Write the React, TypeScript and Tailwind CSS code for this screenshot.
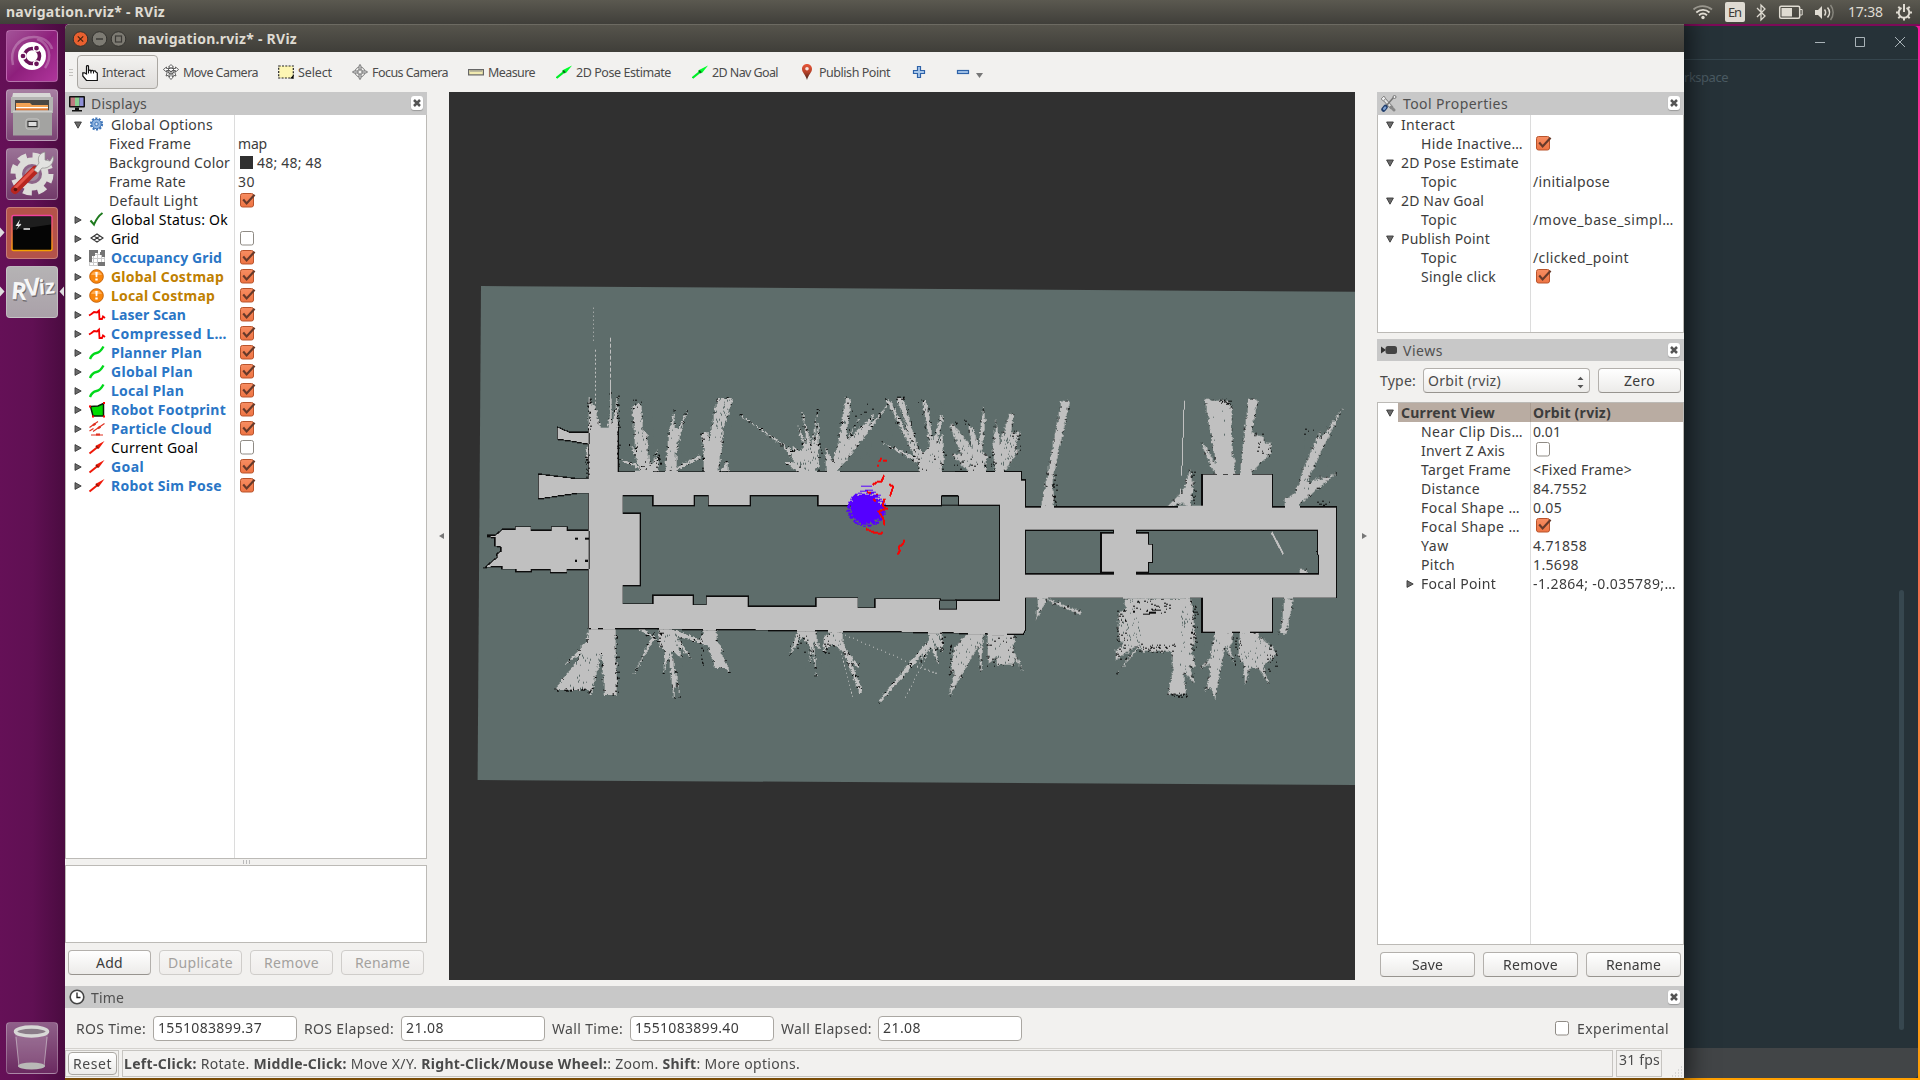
import React, { useLayoutEffect, useRef, useState } from "react";

const FONT = "font-['Noto_Sans','Open_Sans',sans-serif]";

/* Text tracked so that it occupies the given width. */
function T({ w, className = "", children }: { w: number; className?: string; children: React.ReactNode }) {
  const ref = useRef<HTMLSpanElement>(null);
  const [ls, setLs] = useState(0);
  useLayoutEffect(() => {
    const el = ref.current;
    if (!el) return;
    el.style.letterSpacing = "0px";
    const n = (el.textContent || "").length || 1;
    const spacing = (w - el.getBoundingClientRect().width) / n;
    setLs(spacing);
    el.style.letterSpacing = `${spacing}px`;
  }, [w]);
  return (
    <span ref={ref} className={`inline-block whitespace-pre ${className}`} style={{ letterSpacing: `${ls}px` }}>
      {children}
    </span>
  );
}

function Check({ on = true }: { on?: boolean }) {
  return (
    <svg width="16" height="15" viewBox="0 0 16 15" className="shrink-0">
      <defs>
        <linearGradient id="ck" x1="0" y1="0" x2="0" y2="1">
          <stop offset="0" stopColor="#f78d62" />
          <stop offset="1" stopColor="#ee7443" />
        </linearGradient>
      </defs>
      <rect x="0.5" y="0.5" width="13" height="13.5" rx="2" fill={on ? "url(#ck)" : "#fff"} stroke={on ? "#b9542c" : "#8f8b85"} />
      {on && <path d="M3.2 6.6 6.6 10.4 14.6 1.8" fill="none" stroke="#66392a" strokeWidth="2.2" />}
    </svg>
  );
}

function Tri({ open }: { open?: boolean }) {
  return (
    <svg width="8" height="8" viewBox="0 0 8 8" className="shrink-0">
      <path d={open ? "M.6 1h6.8L4 7.2z" : "M1 .6v6.8L7.2 4z"} fill="#6a6a6a" stroke="#3a3a3a" strokeWidth="0.9" />
    </svg>
  );
}

const icons: Record<string, React.ReactNode> = {
  gear: (
    <g>
      <circle cx="7.5" cy="7" r="5.6" fill="none" stroke="#3d74b8" strokeWidth="2" strokeDasharray="2.1 1.4" />
      <circle cx="7.5" cy="7" r="4.7" fill="#8fb4e0" stroke="#3d74b8" />
      <circle cx="7.5" cy="7" r="1.7" fill="#dfeaf7" stroke="#3d74b8" />
    </g>
  ),
  ok: <path d="M1.5 8.5 5 12.500C7 7.500 10 3.500 13.500 1" fill="none" stroke="#1f7a1f" strokeWidth="2" />,
  grid: <path d="M2 7 8 3 14 7 8 11zM5 5l6 4M11 5l-6 4" fill="none" stroke="#333" strokeWidth="1.1" />,
  occ: (
    <g shapeRendering="crispEdges">
      <rect width="16" height="16" fill="#fff" />
      <path d="M0 4h16M0 8h16M0 12h16M4 0v16M8 0v16M12 0v16M.5 0v16M15.5 0v16M0 15.5h16" stroke="#ccc" />
      <path d="M0 0h9v3H6v3H3v6H0zM12 0h4v7h-3V5h-2zM9 12h7v4H9z" fill="#757575" />
    </g>
  ),
  warn: (
    <g>
      <circle cx="7.5" cy="7.5" r="6.8" fill="#f9860c" stroke="#c9650a" />
      <path d="M2 6a6 6 0 0 1 11 0z" fill="#ffae57" />
      <path d="M6.3 3h2.4l-.4 5.2H6.7zM6.3 9.4h2.4v2.2H6.3z" fill="#fff" />
    </g>
  ),
  laser: <path d="M0 8.500 2.500 7 5 5l3 .5 2-2 .5 8.500h2.500l1-2.500 2 1.500" fill="none" stroke="#f50000" strokeWidth="1.800" />,
  plan: <path d="M1 14c1.500-4 3.500-5.500 6.500-6S12 6 14.500 1.500" fill="none" stroke="#00d81a" strokeWidth="2.400" />,
  foot: (
    <g>
      <path d="M1.500 4.500 9 4l5.500-2.500v12.500H4z" fill="#00dc00" stroke="#0a1f0a" strokeWidth="1.500" />
      <path d="M0 3.500h2v2H0zM14 0h2v2h-2zM3 13.500h2v2H3zM14 13.500h2v2h-2z" fill="#f00" />
    </g>
  ),
  cloud: (
    <g stroke="#e03020" strokeWidth="1.200" fill="none">
      <path d="M.5 6.500 9 .5M4 10.500 15.500 2.500M.5 10l4-2.500M2 14h12" />
      <path d="M4 4.200l2.500-1.600M9 7.200l2.500-1.600M7 13.500h4" strokeWidth="2.200" />
    </g>
  ),
  goal: (
    <g>
      <path d="M.5 13.500 8 7.500" stroke="#f01808" strokeWidth="2" />
      <path d="M15.500 1 9.800 8.800 6.400 6z" fill="#f01808" />
      <path d="M7 6l2.500 2.500" stroke="#8a1408" strokeWidth="1.500" />
    </g>
  ),
};

function Icon({ name }: { name: string }) {
  return (
    <svg width="16" height="16" viewBox="0 0 16 16" className="shrink-0 overflow-visible">
      {icons[name]}
    </svg>
  );
}

type Row = {
  t: string;
  w: number;
  icon?: string;
  arrow?: "open" | "closed" | "sub";
  tone?: string;
  check?: boolean;
  v?: string;
  vw?: number;
  swatch?: boolean;
};

const BLUE = "text-[#2a76c6] font-bold";
const AMBER = "text-[#c08000] font-bold";
const BLACK = "text-black";

const displayRows: Row[] = [
  { t: "Global Options", w: 102, icon: "gear", arrow: "open" },
  { t: "Fixed Frame", w: 82, v: "map", vw: 29 },
  { t: "Background Color", w: 121, v: "48; 48; 48", vw: 65, swatch: true },
  { t: "Frame Rate", w: 77, v: "30", vw: 17 },
  { t: "Default Light", w: 89, check: true },
  { t: "Global Status: Ok", w: 117, icon: "ok", arrow: "closed", tone: BLACK },
  { t: "Grid", w: 28, icon: "grid", arrow: "closed", tone: BLACK, check: false },
  { t: "Occupancy Grid", w: 111, icon: "occ", arrow: "closed", tone: BLUE, check: true },
  { t: "Global Costmap", w: 113, icon: "warn", arrow: "closed", tone: AMBER, check: true },
  { t: "Local Costmap", w: 104, icon: "warn", arrow: "closed", tone: AMBER, check: true },
  { t: "Laser Scan", w: 75, icon: "laser", arrow: "closed", tone: BLUE, check: true },
  { t: "Compressed L…", w: 116, icon: "laser", arrow: "closed", tone: BLUE, check: true },
  { t: "Planner Plan", w: 91, icon: "plan", arrow: "closed", tone: BLUE, check: true },
  { t: "Global Plan", w: 82, icon: "plan", arrow: "closed", tone: BLUE, check: true },
  { t: "Local Plan", w: 73, icon: "plan", arrow: "closed", tone: BLUE, check: true },
  { t: "Robot Footprint", w: 115, icon: "foot", arrow: "closed", tone: BLUE, check: true },
  { t: "Particle Cloud", w: 101, icon: "cloud", arrow: "closed", tone: BLUE, check: true },
  { t: "Current Goal", w: 87, icon: "goal", arrow: "closed", tone: BLACK, check: false },
  { t: "Goal", w: 33, icon: "goal", arrow: "closed", tone: BLUE, check: true },
  { t: "Robot Sim Pose", w: 111, icon: "goal", arrow: "closed", tone: BLUE, check: true },
];

const toolRows: Row[] = [
  { t: "Interact", w: 54, arrow: "open" },
  { t: "Hide Inactive…", w: 102, check: true },
  { t: "2D Pose Estimate", w: 118, arrow: "open" },
  { t: "Topic", w: 36, v: "/initialpose", vw: 77 },
  { t: "2D Nav Goal", w: 83, arrow: "open" },
  { t: "Topic", w: 36, v: "/move_base_simpl…", vw: 141 },
  { t: "Publish Point", w: 89, arrow: "open" },
  { t: "Topic", w: 36, v: "/clicked_point", vw: 96 },
  { t: "Single click", w: 75, check: true },
];

const viewRows: Row[] = [
  { t: "Near Clip Dis…", w: 102, v: "0.01", vw: 28 },
  { t: "Invert Z Axis", w: 84, check: false },
  { t: "Target Frame", w: 90, v: "<Fixed Frame>", vw: 99 },
  { t: "Distance", w: 59, v: "84.7552", vw: 54 },
  { t: "Focal Shape …", w: 99, v: "0.05", vw: 29 },
  { t: "Focal Shape …", w: 99, check: true },
  { t: "Yaw", w: 28, v: "4.71858", vw: 54 },
  { t: "Pitch", w: 34, v: "1.5698", vw: 46 },
  { t: "Focal Point", w: 75, arrow: "sub", v: "-1.2864; -0.035789;…", vw: 143 },
];

function DisplayRow({ r }: { r: Row }) {
  return (
    <div className="flex h-[19px] shrink-0 items-center">
      <div className="flex h-full w-[169px] shrink-0 items-center border-r border-[#dcdcdc]">
        {r.arrow ? (
          <>
            <div className="flex w-[23px] justify-center pl-[1px]"><Tri open={r.arrow === "open"} /></div>
            <Icon name={r.icon!} />
            <T w={r.w} className={`ml-[6px] ${r.tone || ""}`}>{r.t}</T>
          </>
        ) : (
          <T w={r.w} className="ml-[43px]">{r.t}</T>
        )}
      </div>
      <div className="flex items-center">
        {r.check !== undefined && <div className="pl-[5px]"><Check on={r.check} /></div>}
        {r.swatch && <div className="ml-[5px] mr-[1px] h-[13px] w-[13px] bg-[#303030]" />}
        {r.v && <T w={r.vw!} className="ml-[3px]">{r.v}</T>}
      </div>
    </div>
  );
}

function PropRow({ r, raise = false }: { r: Row; raise?: boolean }) {
  return (
    <div className="flex h-[19px] shrink-0 items-center">
      <div className="flex h-full w-[153px] shrink-0 items-center border-r border-[#dcdcdc]">
        {r.arrow === "open" && <div className="flex w-[23px] justify-center pl-[1px]"><Tri open /></div>}
        {r.arrow === "sub" && <div className="ml-[28px] flex w-[15px]"><Tri /></div>}
        {!r.arrow && <div className="w-[43px]" />}
        <T w={r.w}>{r.t}</T>
      </div>
      <div className="flex items-center">
        {r.check !== undefined && <div className={`pl-[5px] ${raise ? "pb-[2px]" : ""}`}><Check on={r.check} /></div>}
        {r.v && <T w={r.vw!} className="ml-[2px]">{r.v}</T>}
      </div>
    </div>
  );
}

function CloseBtn() {
  return (
    <div className="mr-[4px] flex h-[14px] w-[12px] items-center justify-center rounded-[3px] bg-white shadow-[0_1px_1px_#999]">
      <svg width="8" height="8" viewBox="0 0 8 8"><path d="M1 1l6 6M7 1 1 7" stroke="#555" strokeWidth="2.500" /></svg>
    </div>
  );
}

function DockHeader({ icon, title, w, h = "h-[23px]" }: { icon: React.ReactNode; title: string; w: number; h?: string }) {
  return (
    <div className={`flex shrink-0 items-center bg-[#c8c8c8] text-[#505050] ${h}`}>
      <div className="flex w-[26px] shrink-0 pl-[3px]">{icon}</div>
      <T w={w} className="flex-none">{title}</T>
      <div className="ml-auto pb-[1px]"><CloseBtn /></div>
    </div>
  );
}

function Btn({ t, w, cls, off }: { t: string; w: number; cls: string; off?: boolean }) {
  return (
    <div
      className={`flex h-[25px] shrink-0 items-center justify-center rounded-[4px] border ${cls} ${
        off
          ? "border-[#cfcdca] bg-linear-to-b from-[#f7f6f5] to-[#efedeb] text-[#a3a19e]"
          : "border-[#b3b0ac] border-b-[#97948f] bg-linear-to-b from-white to-[#ecebe9] text-[#3c3c3c]"
      }`}
    >
      <T w={w}>{t}</T>
    </div>
  );
}

const toolIcons: Record<string, React.ReactNode> = {
  move: (
    <g stroke="#555" fill="#fff" strokeWidth=".9" strokeLinejoin="round">
      <path d="M8 .6 10.600 3H9v1.500h3.500V3L15.600 5.500l-3.100 2.500V6.500H9v1H7v-1H3.500V8L.4 5.500 3.500 3v1.500H7V3H5.400z" />
      <path d="M7 7.500h2v5h1.600L8 15.500l-2.600-3H7z" />
      <path d="M4.500 7.500 3 12l3.500-1.200M11.500 7.500 13 12l-3.500-1.200" />
      <circle cx="8" cy="7" r="3" fill="none" />
    </g>
  ),
  select: (
    <g>
      <path d="M.7 2h14.600v12H.7z" fill="#fdf6b4" stroke="#222" strokeWidth="1.200" strokeDasharray="2 1.300" />
      <path d="M15.500 11v3.500H12z" fill="#000" />
    </g>
  ),
  focus: (
    <g stroke="#7a7a7a" fill="none" strokeWidth="1">
      <circle cx="8" cy="8" r="5" /><circle cx="8" cy="8" r="2.500" />
      <path d="M7 3.500V2L8 .4 9 2v4H7zM7 12.500V14l1 1.600L9 14v-4H7zM3.500 7H2L.4 8 2 9h4V7zM12.500 7H14l1.600 1L14 9h-4V7z" fill="#ddd" />
    </g>
  ),
  measure: (
    <g><rect x=".6" y="5.600" width="14.800" height="5.300" fill="#f1eab0" stroke="#666" strokeWidth="1.200" /><path d="M3 6v2M5 6v2M7 6v2M9 6v2M11 6v2M13 6v2" stroke="#888" /></g>
  ),
  arrow: (
    <g><path d="M.5 14 8 7.800" stroke="#00ee28" strokeWidth="2.200" /><path d="M16 1.500 9.800 9.300 6 6.500z" fill="#00ff2c" /><path d="M7 6.800l2 2" stroke="#066b14" strokeWidth="2" /></g>
  ),
  pin: (
    <g><defs><linearGradient id="pin" x1="0" y1="0" x2="0" y2="1"><stop offset="0" stopColor="#e8573a" /><stop offset=".5" stopColor="#b8432a" /><stop offset="1" stopColor="#3a2018" /></linearGradient></defs>
      <path d="M8 0C5 0 3 2.200 3 5c0 3.500 3.500 5.500 5 11 1.500-5.500 5-7.500 5-11C13 2.200 11 0 8 0z" fill="url(#pin)" /><circle cx="8" cy="4.800" r="1.800" fill="#f7e4df" /></g>
  ),
};

function Tool({ icon, t, w, cls }: { icon: string; t: string; w: number; cls: string }) {
  return (
    <div className={`flex h-[40px] shrink-0 items-center gap-[4px] ${cls}`}>
      <svg width="16" height="16" viewBox="0 0 16 16" className="shrink-0">{toolIcons[icon]}</svg>
      <T w={w} className="text-[12.5px]">{t}</T>
    </div>
  );
}

/* ---- occupancy map, in 1/3 px units ---- */
const bodyA = [
  "M357 450H443V577H357z",
  "M357 577H457V1043H357z",
  "M357 577H1652V646H1414V676H1045V646H839V676H717V646H672V676H551V646H357z",
  "M440 702H509V916H440z",
  "M357 973H551V947H669V976H711V950H833V980H1040V955H1162V985H1217V958H1410V988H1460V962H1600V1062L1400 1056L820 1048L357 1043z",
  "M360 598H322L207 584V655L322 638H360z",
  "M360 459H300L264 444V476L300 481L360 492z",
  "M360 752H290V742H246V752H181V742H138V750H97L76 768H52L76 772V796L95 800V815L82 822L84 832L50 860L97 858V866H140V873H182V867H243V876H289V867H360z",
];
const bodyB = [
  "M300 577H362V602H375V1050L368 1062H300z",
  "M170 577H362V674H177z",
  "M370 683H1308V750H370z",
  "M370 884H1308V952H370z",
  "M1261 683H1308V952H1258V830L1253 815L1254 756z",
  "M605 760H643V745H707V760H745V795H755V845H745V875H709V890H643V875H605z",
  "M908 585H1116V690H908z",
  "M908 945H1116V1055H908z",
];
const rayA = [
  "M357 455V350L366 378L376 380L392 448L412 448L421 400L423 320L425 440L443 345V470z",
  "M357 495L348 508L352 540L357 570z",
  "M516 577L497 508L487 378L514 370L520 455L532 458L534 520L546 577z",
  "M512 565L478 490L500 515L540 565zM515 572L446 536L520 560z",
  "M540 560L568 500L552 545L566 525V575H540z",
  "M585 577L598 450L612 390L614 440L625 450L655 380L640 430L618 520L622 577z",
  "M600 572L690 525L692 535L620 572z",
  "M702 577L698 455L714 455L716 490L742 353L790 353L757 455V500L745 577z",
  "M748 577L770 545L778 577z",
  "M985 577L940 545L975 548L930 488L975 520L965 495L990 515L1000 500L983 435L1012 500L995 390L1024 494L1045 375L1032 495L1045 430L1048 560L1028 577z",
  "M812 403L980 522L978 526L811 406z",
  "M1068 577L1068 505L1090 545V577zM1078 577L1105 490L1128 353H1142L1130 480L1175 400L1135 480L1215 400L1195 440L1265 360L1200 450L1100 577z",
  "M1345 550L1280 355L1300 355L1345 510L1365 515L1380 500L1357 360L1370 365L1390 480L1415 400L1420 420L1398 500L1418 460L1422 540L1410 577L1345 577z",
  "M1335 530L1248 357L1262 365L1340 510zM1235 487L1345 535L1345 550z",
  "M1345 500L1305 355M1375 480L1345 357",
  "M357 1043L350 1085L284 1155L340 1118L253 1230L357 1230L362 1250L395 1118L404 1245L441 1245L436 1043z",
  "M565 1045L568 1100L585 1110L580 1185L596 1125L612 1258L618 1200L635 1270L604 1110L635 1135L625 1100L670 1140L620 1070L690 1088L692 1078L610 1050z",
  "M500 1045L565 1085L520 1045zM550 1060L490 1185L555 1075z",
  "M700 1050L692 1092L712 1095L735 1163H765L783 1180L752 1115L760 1108L740 1085V1050z",
  "M982 1050L960 1125L995 1070L1020 1100V1155L1026 1100L1040 1195L1032 1090L1050 1110L1035 1050z",
  "M1090 1056L1062 1070V1115L1085 1095L1100 1100L1165 1165L1168 1155L1120 1105L1122 1120L1170 1240L1178 1235L1118 1080V1056z",
  "M1375 1056L1380 1075L1228 1260V1272L1360 1120L1350 1152L1380 1100L1408 1160L1395 1095L1418 1118L1416 1056z",
];
const rayB = [
  "M205 577L150 440L158 430L218 505L205 440H220L236 500L250 375L256 420L246 515L262 530L258 577z",
  "M205 577L155 520L220 530zM285 577L278 500L288 415L300 490L330 400L342 405L332 460L360 455L345 510L358 510L312 577z",
  "M422 683L432 640L484 362L510 364L463 575L458 600L462 680L470 683z",
  "M868 683L845 670L800 683L850 630L872 565L876 605L882 600L870 683z",
  "M945 585L903 490L912 490L948 555L915 360L985 362L996 390L997 530L1006 540L1003 585z",
  "M1020 585L1044 358H1074L1055 460L1090 470L1095 490L1113 488V520L1055 575V585z",
  "M1152 683L1155 655L1185 640L1212 562L1262 450L1258 480L1282 450L1330 382L1242 560L1220 610L1264 590L1262 600L1310 580L1200 670L1195 683z",
  "M415 950L408 1020L440 960zM440 955L545 995L540 1004L455 968z",
  "M1152 955L1148 1010L1138 1060H1160L1180 960z",
  "M1200 885V868H1220V885z",
  "M206 1060L160 1105L152 1180L165 1170L148 1250L235 1098L243 1185L250 1060z",
  "M262 1060L265 1155L290 1130V1155H340V1130L375 1180L340 1110L345 1060z",
  "M672 955L678 990L655 1000V1080L672 1090L648 1110V1140L690 1110L715 1095L648 1185L722 1098L725 1116H815L820 1170L802 1245L858 1242L853 1180L885 1210L870 1160H888L875 1120L885 1080L880 1000L872 955z",
  "M945 1055L928 1140L897 1165L930 1150L928 1195L912 1240L932 1220L945 1258L975 1100L1000 1145L990 1095L998 1090V1055z",
  "M1018 1058L1016 1130L1030 1150L1035 1215L1050 1165L1075 1165L1108 1215L1090 1160L1128 1125L1120 1100L1075 1070V1058z",
];
const bodyPaths = { a: bodyA.join(""), b: bodyB.join("") };
const rayPaths = { a: rayA.join(""), b: rayB.join("") };

const rng = (() => {
  let s = 1234567;
  return () => ((s = (s * 1103515245 + 12345) % 2147483648) / 2147483648);
})();

const cloud = Array.from({ length: 420 }, () => {
  const a = rng() * Math.PI * 2;
  const r = 22 + rng() * 34;
  const x = Math.round(1185 + Math.cos(a) * r);
  const y = Math.round(684 + Math.sin(a) * r * 0.95);
  return `M${x} ${y}h${4 + Math.round(rng() * 9)}v3h-9z`;
}).join("");

/* Unknown cells scattered through the fans of scan rays. */
const specks = (
  [
    [500, 360, 50, 180, 20], [600, 380, 60, 180, 24], [735, 353, 55, 120, 50], [960, 480, 90, 90, 35], [1100, 400, 110, 150, 40],
    [1250, 360, 170, 190, 110], [1440, 430, 110, 140, 45], [1590, 450, 60, 110, 60], [2210, 375, 60, 150, 8], [2500, 440, 80, 190, 36],
    [260, 1120, 130, 110, 40], [570, 1060, 90, 120, 30], [970, 1060, 150, 110, 45], [1350, 1060, 80, 100, 36], [1440, 1070, 200, 90, 45],
    [1950, 960, 60, 150, 50], [2130, 960, 45, 240, 40], [2310, 1070, 110, 110, 45], [2200, 1070, 90, 120, 28],
  ] as number[][]
)
  .map(([x, y, w, h, n]) =>
    Array.from({ length: n }, () => `M${Math.round((x + rng() * w) / 3) * 3} ${Math.round((y + rng() * h) / 3) * 3}h3v${rng() > 0.6 ? 6 : 3}h-3z`).join(""),
  )
  .join("");

const blackSpecks = (
  [
    [490, 360, 25, 20, 5], [555, 520, 20, 50, 12], [690, 455, 10, 120, 10], [345, 500, 12, 90, 18], [350, 345, 10, 110, 14], [440, 345, 6, 230, 34],
    [985, 430, 70, 140, 10], [1125, 350, 100, 60, 8], [1270, 350, 30, 8, 8], [1340, 510, 90, 60, 10], [1440, 420, 60, 20, 9], [1450, 510, 110, 60, 14],
    [1560, 500, 15, 70, 10], [1625, 450, 30, 60, 8], [1745, 580, 14, 100, 16], [2160, 570, 14, 100, 12], [2245, 360, 40, 12, 14], [2345, 460, 60, 60, 12],
    [2500, 440, 80, 30, 6], [1940, 990, 30, 150, 34], [1985, 960, 120, 40, 30], [2005, 1090, 110, 25, 34], [2160, 960, 20, 150, 34], [2090, 1240, 60, 12, 24],
    [2290, 1070, 25, 100, 14], [2390, 1085, 30, 90, 18], [1437, 1090, 10, 100, 14], [1550, 1070, 80, 90, 16], [260, 1228, 100, 5, 20], [434, 1070, 10, 180, 22],
    [565, 1050, 10, 50, 12], [690, 1060, 10, 100, 14], [960, 1060, 60, 60, 14], [1060, 1060, 20, 60, 16], [1410, 1060, 12, 60, 12], [2540, 660, 40, 20, 8],
  ] as number[][]
)
  .map(([x, y, w, h, n]) => Array.from({ length: n }, () => `M${Math.round((x + rng() * w) / 3) * 3} ${Math.round((y + rng() * h) / 3) * 3}h${rng() > 0.5 ? 6 : 3}v3h-6z`).join(""))
  .join("");

function MapView() {
  return (
    <svg width="906" height="888" viewBox="449 92 906 888" className="block bg-[#303030]">
      <defs>
        <filter id="rag" x="-5%" y="-5%" width="110%" height="110%">
          <feTurbulence type="fractalNoise" baseFrequency="0.11" numOctaves="2" seed="4" result="n" />
          <feDisplacementMap in="SourceGraphic" in2="n" scale="13" xChannelSelector="R" yChannelSelector="G" />
        </filter>
      </defs>
      <path d="M481 286 1356 291.700V785L477.600 780z" fill="#5e6d6b" />
      <g shapeRendering="crispEdges" transform="translate(470 280) scale(.33333)">
        <g filter="url(#rag)">
          <path d={rayPaths.a} fill="#c0c0c0" stroke="#111" strokeWidth="4" strokeDasharray="4 34" />
          <path d={rayPaths.b} transform="translate(1290 0)" fill="#c0c0c0" stroke="#111" strokeWidth="4" strokeDasharray="4 30" />
        </g>
        <path d={bodyPaths.a} fill="none" stroke="#0c0c0c" strokeWidth="7" />
        <path d={bodyPaths.b} transform="translate(1290 0)" fill="none" stroke="#0c0c0c" strokeWidth="7" />
        <path d={bodyPaths.a} fill="#c0c0c0" />
        <path d={bodyPaths.b} transform="translate(1290 0)" fill="#c0c0c0" />
        {/* openings where rays leave the corridors */}
        <path
          d="M357 449H443M357 449H443M496 576H550M585 576H625M705 576H748M988 576H1042M1070 576H1110M1350 576H1415M1495 576H1548M1575 576H1602M1712 682H1752M2125 682H2198M2240 584H2260M2275 584H2290M2310 584H2345M2445 682H2490M362 1044H385M400 1044H436M568 1046H605M700 1049H738M982 1052H1035M1075 1055H1120M1375 1058H1416M1495 1060H1545M1555 1062H1610M1700 953H1735M1960 953H2160M2235 1056H2285M2310 1056H2340M2442 953H2470"
          stroke="#c0c0c0" strokeWidth="9"
        />
        <path d="M1414 648H1467V676H1414zM1410 962H1460V988H1410z" fill="#5e6d6b" stroke="#0c0c0c" strokeWidth="3" />
        <path d={specks} fill="#5e6d6b" />
        <path d={blackSpecks} fill="#0c0c0c" />
        <path d="M315 772h8v6h-8zM346 772h10v6h-10zM314 838h8v6h-8zM346 838h8v6h-8zM2018 1000h20v-5h20v6h-18v4h-22zM2046 992h28v-4h-28z" fill="#0c0c0c" />
        <g fill="none" stroke="#c0c0c0" strokeWidth="3">
          <path d="M372 82V192" strokeDasharray="3 9" />
          <path d="M378 210V375" strokeDasharray="6 7" />
          <path d="M422 172V330" strokeDasharray="14 4" />
          <path d="M422 300V450M2143 362 2135 586M2131 625V650" />
          <path d="M2405 757 2440 822" strokeWidth="6" />
          <path d="M1125 1065 1400 1182" strokeDasharray="4 9" />
          <path d="M1380 1110 1305 1255M1115 1120 1148 1250M1400 1180l-60-20" strokeDasharray="4 8" />
          <path d="M388 1150V1235" strokeDasharray="3 5" stroke="#5e6d6b" />
        </g>
        <circle cx="1187" cy="686" r="43" fill="#5500ff" />
        <path d={cloud} fill="#5500ff" />
        <path d="M1173 618h34v3h-34zM1184 630h26v3h-26z" fill="#5500ff" />
        <path
          d="M1222 557h5M1228 545l6-11M1240 542h10M1242 586l-8 20h-12l-14 8M1256 612l14 8-10 28M1190 636l12 2M1210 655l6 10M1244 656l-6 20 12 10-24 8 14 22 4 20M1220 640v4M1188 747l24 10 20 4 6-6M1303 780l-4 12-12 8 2 12-6 12"
          fill="none" stroke="#f50505" strokeWidth="6"
        />
      </g>
    </svg>
  );
}

function LauncherTile({ cls, children }: { cls: string; children: React.ReactNode }) {
  return (
    <div className={`flex h-[52px] w-[52px] shrink-0 items-center justify-center rounded-[4px] border border-white/25 ${cls}`}>
      <svg width="50" height="50" viewBox="0 0 50 50">{children}</svg>
    </div>
  );
}

function Launcher() {
  return (
    <div className="relative flex w-[65px] shrink-0 flex-col gap-[7px] bg-linear-to-r from-[#651057] via-[#601053] to-[#4a0b40] pt-[6px] pl-[6px]">
      <LauncherTile cls="bg-linear-to-br from-[#a35298] via-[#8e1f7c] to-[#b0359c]">
        <path d="M6 34C2 18 12 6 27 6c9 0 16 5 18 12M30 8c12 4 16 18 8 29" fill="none" stroke="#fff" strokeOpacity=".25" strokeWidth="2.500" />
        <circle cx="25" cy="25" r="14" fill="#fff" />
        <circle cx="25" cy="25" r="7.500" fill="none" stroke="#6a1459" strokeWidth="3.600" />
        <g fill="#6a1459" stroke="#fff" strokeWidth="1.300"><circle cx="16" cy="25" r="3" /><circle cx="29.500" cy="17.200" r="3" /><circle cx="29.500" cy="32.800" r="3" /></g>
      </LauncherTile>
      <LauncherTile cls="bg-linear-to-b from-[#a77fa2] to-[#7b4474]">
        <path d="M6 3h37l3 10H4z" fill="#d8d8d6" />
        <path d="M4 7h42v16H4z" fill="#b4b4b2" /><path d="M8 10h34v12H8z" fill="#4a4744" />
        <path d="M9 13h14l2 2h16v7H9z" fill="#f2a355" /><path d="M9 17h32v1.500H9z" fill="#fff" /><path d="M9 18.500h32v3H9z" fill="#e2762f" />
        <path d="M6 20.500h39v25H6z" fill="#a3a3a1" /><path d="M6 20.500h39v2H6z" fill="#cdcdcb" />
        <rect x="19" y="29" width="13" height="10" rx="2" fill="#9a9a98" stroke="#c8c8c6" />
        <rect x="21" y="31.500" width="9" height="5" fill="#ddd" stroke="#333" />
      </LauncherTile>
      <LauncherTile cls="bg-linear-to-b from-[#9a7296] to-[#723a6a]">
        <circle cx="25" cy="25" r="18.500" fill="none" stroke="#deddda" strokeWidth="6" strokeDasharray="8.500 6.030" />
        <circle cx="25" cy="25" r="16.500" fill="#dddcd9" /><circle cx="25" cy="25" r="10" fill="#8d6488" /><circle cx="25" cy="25" r="7" fill="#a38b9f" />
        <path d="M8 41 28 21" stroke="#b7261f" strokeWidth="8" strokeLinecap="round" />
        <path d="M8 39 27 20" stroke="#e4574b" strokeWidth="3" />
        <path d="M27 21l5-7c-2-6 1-10 6-11l0 8 5 1 3-5c2 7-4 13-11 12l-4 5z" fill="#e2e2e0" stroke="#8d8d8b" strokeWidth=".7" />
        <circle cx="8.500" cy="40.500" r="1.800" fill="#5a1410" />
      </LauncherTile>
      <LauncherTile cls="bg-[#b4524a]">
        <rect x="5" y="7.500" width="40" height="35" rx="1.500" fill="#050505" stroke="url(#termg)" strokeWidth="1.500" />
        <defs><linearGradient id="termg" x1="0" y1="0" x2="0" y2="1"><stop offset="0" stopColor="#f0419c" /><stop offset="1" stopColor="#f5a000" /></linearGradient></defs>
        <path d="M6 8.500h38v8L6 22z" fill="#fff" opacity=".1" />
        <path d="M13 11.500 8.500 18h4L14.500 16.500h-3z" fill="#f2f2f2" /><path d="M13 15.500l-4 6.500 5-5.500z" fill="#f2f2f2" />
        <path d="M16.500 21h6.500" stroke="#e8e8e8" strokeWidth="1.600" />
      </LauncherTile>
      <LauncherTile cls="bg-linear-to-b from-[#b5b3b4] to-[#aaa1a9]">
        <g fontSize="24" fontWeight="bold" fontFamily="Open Sans">
          <g fill="#6f6a6e"><text x="5" y="34" transform="rotate(5 12 25)">R</text><text x="19" y="30" transform="rotate(-6 26 22)">V</text><text x="33" y="28" fontSize="20" transform="rotate(-4 38 22)">iz</text></g>
          <g fill="#f6f6f6"><text x="4" y="32.500" transform="rotate(5 12 25)">R</text><text x="18" y="28.500" transform="rotate(-6 26 22)">V</text><text x="32" y="27" fontSize="20" transform="rotate(-4 38 22)">iz</text></g>
        </g>
      </LauncherTile>
      <div className="mt-auto mb-[6px]">
        <LauncherTile cls="bg-linear-to-b from-[#8f6089] to-[#6b2a61]">
          <path d="M8 11h33l-4 34H12z" fill="#fff" opacity=".15" />
          <path d="M9 14 12 44M40 14l-3 30" stroke="#ddd" strokeOpacity=".5" />
          <ellipse cx="24.500" cy="8.500" rx="16" ry="4.500" fill="#8a7c88" stroke="#d8d8d6" strokeWidth="3.500" />
          <ellipse cx="24.500" cy="43" rx="13.500" ry="3.500" fill="#b9b9b7" />
        </LauncherTile>
      </div>
      <svg width="65" height="140" viewBox="0 0 65 140" className="absolute top-[190px] left-0">
        <path d="M0 13.500 4.500 18.500 0 23.500zM0 72.500l4.500 5L0 82.500zM64 72.500l-4.500 5 4.500 5z" fill="#ddd" />
      </svg>
    </div>
  );
}

function Field({ t, w }: { t: string; w: number }) {
  return (
    <div className="flex h-[25px] w-[144px] shrink-0 items-center rounded-[4px] border border-[#aaa7a2] bg-white pb-[1px] pl-[4px] text-[#3c3c3c]">
      <T w={w}>{t}</T>
    </div>
  );
}

export default function App() {
  return (
    <div className={`flex h-[1080px] w-[1920px] flex-col overflow-hidden bg-[#601053] text-[14px] leading-[19px] text-[#3c3c3c] ${FONT}`}>
      <div className="flex h-[24px] shrink-0 items-center bg-linear-to-b from-[#5b5950] to-[#403f3a] pb-[1px] pl-[6px] text-[#dfdbd2]">
        <T w={159} className="font-bold">navigation.rviz* - RViz</T>
        <svg width="227" height="24" viewBox="1690 0 227 24" className="mt-[1px] mr-[3px] ml-auto">
          <g fill="none" stroke="#dfdbd2" strokeWidth="1.800">
            <path d="M1693.500 9.500c5-4.500 13-4.500 18.500 0" opacity=".5" />
            <path d="M1696.300 12.500c4-3.500 9.500-3.500 13.200 0M1699 15.300c2.500-2.200 5.500-2.200 8 0" />
          </g>
          <circle cx="1703" cy="17.500" r="1.700" fill="#dfdbd2" />
          <rect x="1725" y="2" width="20" height="20" rx="2" fill="#dfdbd2" />
          <text x="1728" y="17" fontSize="13" fontFamily="Noto Sans" fill="#3c3b37" textLength="14">En</text>
          <path d="M1757 8l8 8-4 4v-15l4 4-8 8" fill="none" stroke="#dfdbd2" strokeWidth="1.300" />
          <rect x="1779.700" y="6.200" width="20" height="12" rx="1.500" fill="none" stroke="#dfdbd2" strokeWidth="1.500" />
          <path d="M1781.500 8h10.500v8.500h-10.500z" fill="#dfdbd2" /><path d="M1800 9.500h2.200v5.500h-2.200" fill="none" stroke="#dfdbd2" />
          <path d="M1815 10h3l4-4v13l-4-4h-3z" fill="#dfdbd2" />
          <path d="M1824.500 9.500c1.500 2 1.500 4 0 6M1827.500 7.500c2.500 3 2.500 7 0 10" fill="none" stroke="#dfdbd2" strokeWidth="1.500" />
          <path d="M1830.500 5c3.500 4.500 3.500 10.500 0 15" fill="none" stroke="#dfdbd2" strokeWidth="1.500" opacity=".4" />
          <text x="1848" y="17" fontSize="14" fontFamily="Noto Sans" fill="#dfdbd2" textLength="35">17:38</text>
          <path d="M1901.500 7.800a5.300 5.300 0 1 0 5 0" fill="none" stroke="#dfdbd2" strokeWidth="2" />
          <path d="M1904 4v8M1896 12.500h2.500M1909.500 12.500h2.500M1898.300 6.800l1.800 1.800M1909.700 6.800l-1.800 1.800M1898.300 18.200l1.800-1.800M1909.700 18.200l-1.800-1.800M1904 18v2.500" stroke="#dfdbd2" strokeWidth="2" />
        </svg>
      </div>

      <div className="flex min-h-0 flex-1">
        <Launcher />

        <div className="z-10 flex w-[1619px] shrink-0 flex-col border-b-2 border-[#7a4c06] bg-[#f2f1ef] shadow-[0_0_22px_6px_rgba(0,0,0,0.55)] [clip-path:inset(0_-60px_0_0_round_5px_0_0_0)]">
          {/* title bar */}
          <div className="flex h-[28px] shrink-0 items-center border-t border-[#6c6a62] bg-linear-to-b from-[#56544c] to-[#3f3e39] pl-[7px] text-[#dfdbd2]">
            <svg width="56" height="18" viewBox="0 0 56 18">
              <circle cx="8.500" cy="9" r="7.300" fill="#e9602f" stroke="#33322e" />
              <path d="M5.800 6.300l5.400 5.400M11.200 6.300l-5.400 5.400" stroke="#44230f" strokeWidth="1.200" />
              <circle cx="27.500" cy="9" r="7.300" fill="#7d7b73" stroke="#33322e" /><path d="M24 9h7" stroke="#3c3b37" strokeWidth="1.300" />
              <circle cx="46.500" cy="9" r="7.300" fill="#7d7b73" stroke="#33322e" /><rect x="43.500" y="6" width="6" height="6" fill="none" stroke="#3c3b37" strokeWidth="1.200" />
            </svg>
            <T w={159} className="ml-[10px] font-bold">navigation.rviz* - RViz</T>
          </div>

          {/* toolbar */}
          <div className="flex h-[40px] shrink-0 items-center pl-[4px] text-[#4c4c4c]">
            <div className="flex w-[4px] flex-col gap-[2px]">
              <i className="h-px bg-[#c4c2be]" /><i className="h-px bg-[#c4c2be]" /><i className="h-px bg-[#c4c2be]" />
            </div>
            <div className="ml-[4px] flex h-[34px] w-[81px] items-center gap-[4px] rounded-[4px] border border-[#aaa7a2] bg-linear-to-b from-[#f3f2f0] to-[#dfdddb] pt-[1px] pl-[4px]">
              <svg width="16" height="16" viewBox="0 0 16 16">
                <path d="M4.500 9V1.500c0-1.300 2-1.300 2 0V6c.3-1.200 2.300-1.200 2.500 0 .5-1 2.300-.8 2.500.3.700-.8 2.300-.5 2.300.7l1.500 1v7.500H4.500L.8 11V7.800h1.700z" fill="#fff" stroke="#111" strokeWidth="1.200" />
                <path d="M6.500 6v2.500M9 6v2.500M11.500 6.500v2" stroke="#111" />
              </svg>
              <T w={43} className="text-[12.5px]">Interact</T>
            </div>
            <div className="ml-[5px] flex">
              <Tool icon="move" t="Move Camera" w={75} cls="w-[115px]" />
              <Tool icon="select" t="Select" w={34} cls="w-[74px]" />
              <Tool icon="focus" t="Focus Camera" w={76} cls="w-[116px]" />
              <Tool icon="measure" t="Measure" w={47} cls="w-[88px]" />
              <Tool icon="arrow" t="2D Pose Estimate" w={95} cls="w-[136px]" />
              <Tool icon="arrow" t="2D Nav Goal" w={66} cls="w-[107px]" />
              <Tool icon="pin" t="Publish Point" w={71} cls="w-[111px]" />
            </div>
            <svg width="76" height="20" viewBox="910 62 76 20">
              <path d="M917.500 66.500h3v4h4v3h-4v4h-3v-4h-4v-3h4z" fill="#a9c8ea" stroke="#2e62a8" strokeWidth="1.200" />
              <rect x="957.500" y="70.500" width="11" height="3" fill="#a9c8ea" stroke="#2e62a8" strokeWidth="1.200" />
              <path d="M976 73h7l-3.500 5z" fill="#777" />
            </svg>
          </div>

          {/* docks */}
          <div className="flex h-[894px] shrink-0">
            <div className="flex w-[362px] shrink-0 flex-col">
              <DockHeader
                title="Displays" w={56}
                icon={
                  <svg width="18" height="17" viewBox="0 0 18 17">
                    <rect x="1" y="1" width="16" height="11.500" rx="1" fill="#111" />
                    <path d="M2.500 2.500h4.500v8.500H2.500z" fill="#c07a80" /><path d="M7 2.500h4.500v8.500H7z" fill="#88cf90" /><path d="M11.500 2.500H15.500v8.500h-4z" fill="#8f8fd6" />
                    <path d="M7 12.500h4v2.500H7zM4 15h10v1.500H4z" fill="#111" />
                  </svg>
                }
              />
              <div className="flex h-[744px] shrink-0 flex-col border border-t-0 border-[#bcbab6] bg-white">
                {displayRows.map((r, i) => <DisplayRow key={i} r={r} />)}
                <div className="w-[169px] flex-1 border-r border-[#dcdcdc]" />
              </div>
              <div className="flex h-[6px] shrink-0 items-center justify-center gap-[2px]">
                <i className="h-[4px] w-px bg-[#bbb]" /><i className="h-[4px] w-px bg-[#bbb]" /><i className="h-[4px] w-px bg-[#bbb]" />
              </div>
              <div className="h-[78px] shrink-0 border border-[#bcbab6] bg-white" />
              <div className="mt-[7px] flex gap-[8px] pl-[3px]">
                <Btn t="Add" w={27} cls="w-[83px]" />
                <Btn t="Duplicate" w={65} cls="w-[83px]" off />
                <Btn t="Remove" w={55} cls="w-[83px]" off />
                <Btn t="Rename" w={55} cls="w-[83px]" off />
              </div>
            </div>

            <div className="flex h-[888px] w-[22px] shrink-0 items-center justify-center pl-[7px]">
              <svg width="7" height="8" viewBox="0 0 7 8"><path d="M6 1v6L1 4z" fill="#777" /></svg>
            </div>
            <MapView />
            <div className="flex h-[888px] w-[22px] shrink-0 items-center pl-[6px]">
              <svg width="7" height="8" viewBox="0 0 7 8"><path d="M1 1v6l5-3z" fill="#777" /></svg>
            </div>

            <div className="flex w-[307px] shrink-0 flex-col">
              <DockHeader
                title="Tool Properties" w={105}
                icon={
                  <svg width="17" height="17" viewBox="0 0 17 17">
                    <path d="M3 3l9 10" stroke="#777" strokeWidth="3.500" /><path d="M3 3l9 10" stroke="#e4e4e4" strokeWidth="2" />
                    <path d="M1 4l3-3 1.500 2.500L3.500 6z" fill="#eee" stroke="#777" strokeWidth=".8" />
                    <path d="M14 2 6 11" stroke="#777" strokeWidth="1.500" /><circle cx="14.500" cy="2" r="1.500" fill="#eee" stroke="#777" />
                    <path d="M5.500 12 3.500 14.500" stroke="#23406e" strokeWidth="4.500" strokeLinecap="round" /><path d="M5.200 12.500 4 14" stroke="#7d9fd0" strokeWidth="2.200" strokeLinecap="round" />
                    <path d="M11 12l3 3" stroke="#888" strokeWidth="3" strokeLinecap="round" />
                  </svg>
                }
              />
              <div className="flex h-[218px] shrink-0 flex-col border border-t-0 border-[#bcbab6] bg-white">
                {toolRows.map((r, i) => <PropRow key={i} r={r} />)}
                <div className="w-[153px] flex-1 border-r border-[#dcdcdc]" />
              </div>
              <div className="h-[6px] shrink-0" />
              <DockHeader
                title="Views" w={40} h="h-[22px]"
                icon={
                  <svg width="18" height="10" viewBox="0 0 18 10"><path d="M1 1.500 6 5 1 8.500z" fill="#333" /><rect x="5.500" y="1" width="11.500" height="8" rx="2.500" fill="#444" /></svg>
                }
              />
              <div className="flex h-[41px] shrink-0 items-center pb-[2px] pl-[3px] text-[#4a4a4a]">
                <T w={36}>Type:</T>
                <div className="ml-[7px] flex h-[25px] w-[167px] items-center rounded-[4px] border border-[#b3b0ac] border-b-[#97948f] bg-linear-to-b from-white to-[#ecebe9] pr-[5px] pl-[4px]">
                  <T w={73}>Orbit (rviz)</T>
                  <svg width="7" height="13" viewBox="0 0 7 13" className="mt-[3px] ml-auto"><path d="M.5 4 3.500.8 6.500 4zM.5 9h6l-3 3.200z" fill="#555" /></svg>
                </div>
                <Btn t="Zero" w={31} cls="ml-[8px] w-[83px]" />
              </div>
              <div className="flex h-[543px] shrink-0 flex-col border border-[#bcbab6] bg-white">
                <div className="flex h-[19px] shrink-0 items-center font-bold">
                  <div className="flex w-[20px] justify-center pl-[4px]"><Tri open /></div>
                  <div className="flex h-full w-[133px] items-center border-r border-[#a99c91] bg-[#b9aca2] pl-[3px]"><T w={94}>Current View</T></div>
                  <div className="flex h-full flex-1 items-center bg-[#b9aca2] pl-[2px]"><T w={78}>Orbit (rviz)</T></div>
                </div>
                {viewRows.map((r, i) => <PropRow key={i} r={r} raise />)}
                <div className="w-[153px] flex-1 border-r border-[#dcdcdc]" />
              </div>
              <div className="mt-[7px] flex gap-[8px] pl-[3px]">
                <Btn t="Save" w={31} cls="w-[95px]" />
                <Btn t="Remove" w={55} cls="w-[95px]" />
                <Btn t="Rename" w={55} cls="w-[95px]" />
              </div>
            </div>
          </div>

          {/* time panel */}
          <DockHeader
            title="Time" w={33} h="h-[22px]"
            icon={
              <svg width="18" height="18" viewBox="0 0 18 18"><circle cx="9" cy="9" r="6.800" fill="#fff" stroke="#444" strokeWidth="1.600" /><path d="M9 4.500V9.500h3.500" fill="none" stroke="#222" strokeWidth="1.300" /></svg>
            }
          />
          <div className="flex h-[40px] shrink-0 items-center pl-[11px] text-[#4a4a4a]">
            <T w={70}>ROS Time:</T><div className="w-[7px]" /><Field t="1551083899.37" w={104} />
            <div className="w-[7px]" /><T w={90}>ROS Elapsed:</T><div className="w-[7px]" /><Field t="21.08" w={38} />
            <div className="w-[7px]" /><T w={71}>Wall Time:</T><div className="w-[7px]" /><Field t="1551083899.40" w={104} />
            <div className="w-[7px]" /><T w={91}>Wall Elapsed:</T><div className="w-[6px]" /><Field t="21.08" w={38} />
            <div className="mr-[15px] ml-auto flex items-center gap-[6px]"><Check on={false} /><T w={92}>Experimental</T></div>
          </div>

          {/* status bar */}
          <div className="flex min-h-0 flex-1 items-center border-t border-[#d4d2ce] text-[#4a4a4a]">
            <div className="flex h-[27px] w-[54px] shrink-0 items-center border border-[#c6c4c0] pl-[2px]">
              <div className="flex h-[23px] w-[49px] items-center justify-center rounded-[4px] border border-[#aaa7a2] bg-linear-to-b from-white to-[#ecebe9]"><T w={39}>Reset</T></div>
            </div>
            <div className="ml-[3px] flex h-[27px] w-[1491px] shrink-0 items-center border border-[#c6c4c0] pl-[1px]">
              <T w={676}>
                <b>Left-Click:</b> Rotate. <b>Middle-Click:</b> Move X/Y. <b>Right-Click/Mouse Wheel:</b>: Zoom. <b>Shift</b>: More options.
              </T>
            </div>
            <div className="ml-[3px] flex h-[27px] w-[46px] shrink-0 items-start border border-[#c6c4c0] pl-[2px] leading-[17px]"><T w={41}>31 fps</T></div>
            <svg width="12" height="12" viewBox="0 0 12 12" className="mt-auto ml-auto mr-[1px] mb-[1px]"><path d="M1 11h1M4 11h1M7 11h1M10 11h1M4 8h1M7 8h1M10 8h1M7 5h1M10 5h1M10 2h1" stroke="#bbb" /></svg>
          </div>
        </div>

        {/* editor window behind */}
        <div className="flex flex-1 flex-col bg-linear-to-b from-[#f5149c] via-[#f06a50] to-[#ffa000] pb-[2px]">
          <div className="h-[2px] shrink-0 bg-[#7d0a58]" />
          <div className="mr-[2px] flex flex-1 flex-col rounded-tr-[4px] bg-[#263238] text-[#4a5a62]">
            <div className="flex h-[34px] shrink-0 items-center justify-end border-b border-[#35454d] pr-[12px] pb-[2px]">
              <svg width="92" height="12" viewBox="0 0 92 12" fill="none" stroke="#a9b3b8"><path d="M1 6.500h10M41.500 1.500h9v9h-9zM81 1l10 10M91 1 81 11" /></svg>
            </div>
            <div className="h-[32px] pt-[8px] text-[13px]"><T w={44}>rkspace</T></div>
            <div className="flex flex-1 justify-end pr-[14px]"><div className="mt-[498px] h-[440px] w-[5px] rounded-full bg-[#37474f]" /></div>
            <div className="h-[30px] shrink-0 rounded-br-[4px] bg-[#424547]" />
          </div>
        </div>
      </div>
    </div>
  );
}
